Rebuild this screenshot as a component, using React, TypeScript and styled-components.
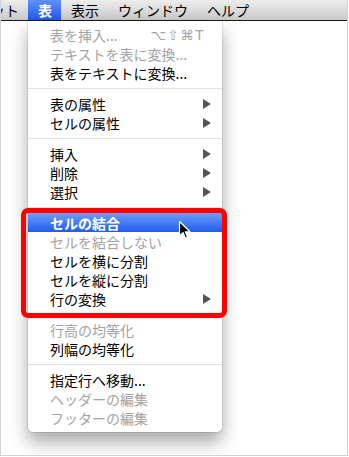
import React, { FC } from 'react';
import styled, { createGlobalStyle } from 'styled-components';

const GlobalStyle = createGlobalStyle`
  body {
    margin: 0;
    background: #fff;
    font-family: 'Noto Sans CJK JP', 'Noto Sans', sans-serif;
  }
`;

const Screen = styled.div`
  position: relative;
  box-sizing: border-box;
  width: 348px;
  height: 456px;
  border: 1px solid #d2d2d2;
  border-top: none;
  overflow: hidden;
  background: #fff;
`;

const MenuBar = styled.div`
  display: flex;
  height: 20px;
  border-bottom: 1px solid #1c1c1c;
  background: linear-gradient(#ededed, #c9c9c9);
`;

const BarItem = styled.div<{ $active?: boolean; $clip?: boolean }>`
  padding: 0 9px 0 10px;
  margin-left: ${(p) => (p.$clip ? '-20px' : '0')};
  font-size: 14px;
  line-height: 20px;
  color: ${(p) => (p.$active ? '#fff' : '#000')};
  font-weight: ${(p) => (p.$active ? 600 : 400)};
  background: ${(p) =>
    p.$active ? 'linear-gradient(#5f90f6, #2258f1)' : 'transparent'};
`;

const Dropdown = styled.div`
  position: absolute;
  left: 27px;
  top: 21px;
  width: 194px;
  padding: 4px 0 5px;
  background: #fff;
  border-radius: 0 0 5px 5px;
  box-shadow: 0 0 0 1px rgba(0, 0, 0, 0.08), 0 10px 18px rgba(0, 0, 0, 0.35);
`;

const Item = styled.div<{ $disabled?: boolean; $selected?: boolean }>`
  display: flex;
  align-items: center;
  justify-content: space-between;
  height: 19px;
  padding: 0 11px 0 22px;
  font-size: 14px;
  color: ${(p) => (p.$selected ? '#fff' : p.$disabled ? '#a3a3a3' : '#000')};
  font-weight: ${(p) => (p.$selected ? 600 : 400)};
  background: ${(p) =>
    p.$selected ? 'linear-gradient(#6f9df7, #1e5cf0)' : 'transparent'};
`;

const Shortcut = styled.span`
  margin-right: 6px;
  font-family: 'DejaVu Sans', sans-serif;
  font-size: 13.5px;
  letter-spacing: 1.5px;
  color: #a3a3a3;
`;

const Arrow = styled.span`
  width: 0;
  height: 0;
  border-top: 5px solid transparent;
  border-bottom: 5px solid transparent;
  border-left: 8px solid #555;
`;

const Separator = styled.div`
  height: 1px;
  margin: 6px 0 5px;
  background: #e2e2e2;
`;

const Highlight = styled.div`
  position: absolute;
  left: 20px;
  top: 208px;
  width: 206px;
  height: 110px;
  box-sizing: border-box;
  border: 5px solid #ff0000;
  border-radius: 7px;
`;

const Cursor = styled.svg`
  position: absolute;
  left: 177px;
  top: 220px;
`;

type Row =
  | { sep: true }
  | {
      sep?: false;
      label: string;
      disabled?: boolean;
      selected?: boolean;
      sub?: boolean;
      shortcut?: string;
    };

const rows: Row[] = [
  { label: '表を挿入...', disabled: true, shortcut: '⌥⇧⌘T' },
  { label: 'テキストを表に変換...', disabled: true },
  { label: '表をテキストに変換...' },
  { sep: true },
  { label: '表の属性', sub: true },
  { label: 'セルの属性', sub: true },
  { sep: true },
  { label: '挿入', sub: true },
  { label: '削除', sub: true },
  { label: '選択', sub: true },
  { sep: true },
  { label: 'セルの結合', selected: true },
  { label: 'セルを結合しない', disabled: true },
  { label: 'セルを横に分割' },
  { label: 'セルを縦に分割' },
  { label: '行の変換', sub: true },
  { sep: true },
  { label: '行高の均等化', disabled: true },
  { label: '列幅の均等化' },
  { sep: true },
  { label: '指定行へ移動...' },
  { label: 'ヘッダーの編集', disabled: true },
  { label: 'フッターの編集', disabled: true },
];

const App: FC = () => {
  return (
    <Screen>
      <GlobalStyle />
      <MenuBar>
        <BarItem $clip>ット</BarItem>
        <BarItem $active>表</BarItem>
        <BarItem>表示</BarItem>
        <BarItem>ウィンドウ</BarItem>
        <BarItem>ヘルプ</BarItem>
      </MenuBar>
      <Dropdown>
        {rows.map((row, i) => {
          if (row.sep) return <Separator key={i} />;
          return (
            <Item key={i} $disabled={row.disabled} $selected={row.selected}>
              <span>{row.label}</span>
              {row.shortcut && <Shortcut>{row.shortcut}</Shortcut>}
              {row.sub && <Arrow />}
            </Item>
          );
        })}
      </Dropdown>
      <Highlight />
      <Cursor width="14" height="20" viewBox="0 0 14 20">
        <path
          d="M1.5 1.5 L1.5 16 L5 12.6 L7.4 18 L9.6 17 L7.3 11.8 L12 11.8 Z"
          fill="#000"
          stroke="#fff"
          strokeWidth="1.2"
          strokeLinejoin="round"
        />
      </Cursor>
    </Screen>
  );
};

export default App;
